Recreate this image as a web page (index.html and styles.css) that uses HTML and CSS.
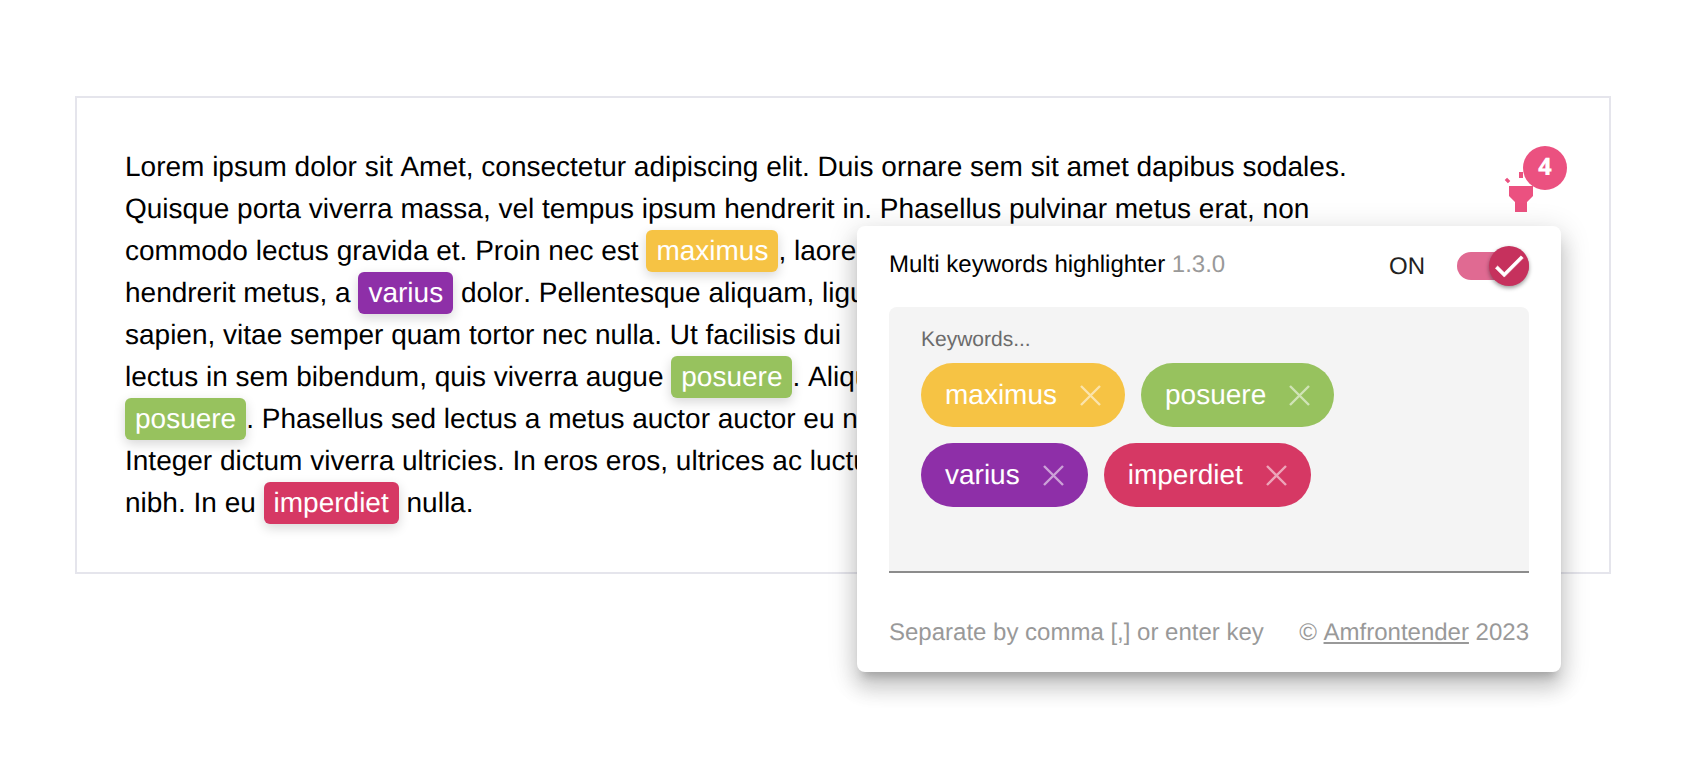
FILE: index.html
```html
<!DOCTYPE html>
<html lang="en">
<head>
<meta charset="utf-8">
<meta name="viewport" content="width=device-width, initial-scale=1">
<title>Multi keywords highlighter</title>
<link rel="stylesheet" href="styles.css">
</head>
<body>
<main class="page">
  <article class="card">
    <p class="copy">
      Lorem ipsum dolor sit Amet, consectetur adipiscing elit. Duis ornare sem sit amet dapibus sodales.<br>
      Quisque porta viverra massa, vel tempus ipsum hendrerit in. Phasellus pulvinar metus erat, non<br>
      commodo lectus gravida et. Proin nec est <mark class="hit amber">maximus</mark>, laoreet<br>
      hendrerit metus, a <mark class="hit purple">varius</mark> dolor. Pellentesque aliquam, ligula<br>
      sapien, vitae semper quam tortor nec nulla. Ut facilisis dui<br>
      lectus in sem bibendum, quis viverra augue <mark class="hit green">posuere</mark>. Aliquam<br>
      <mark class="hit green">posuere</mark>. Phasellus sed lectus a metus auctor auctor eu nec<br>
      Integer dictum viverra ultricies. In eros eros, ultrices ac luctus<br>
      nibh. In eu <mark class="hit rose">imperdiet</mark> nulla.
    </p>

    <div class="launcher">
      <svg class="torch" viewBox="0 0 24 24" aria-hidden="true"><path d="M6 14l3 3v5h6v-5l3-3V9H6zM11 2h2v3h-2zM3.85 6.05l1.2-1.2 1.6 1.6-1.2 1.2zM16.96 6.585l2.123-2.12 1.414 1.414L18.375 8z"/></svg>
      <span class="badge">4</span>
    </div>

    <section class="popup">
      <header class="head">
        <h1 class="title">Multi keywords highlighter <span class="version">1.3.0</span></h1>
        <label class="power">
          <span>ON</span>
          <span class="switch">
            <input class="track" type="checkbox" checked>
            <span class="thumb"><svg class="tick" viewBox="0 0 24 24" aria-hidden="true"><path d="M9 16.17L4.83 12l-1.42 1.41L9 19 21 7l-1.41-1.41z"/></svg></span>
          </span>
        </label>
      </header>

      <div class="field">
        <label class="label" for="keywords">Keywords...</label>
        <div class="chips">
          <span class="chip amber">maximus<button class="remove" type="button" aria-label="Remove maximus"><svg viewBox="0 0 21 21"><path d="M1 1l19 19M20 1L1 20"/></svg></button></span>
          <span class="chip green">posuere<button class="remove" type="button" aria-label="Remove posuere"><svg viewBox="0 0 21 21"><path d="M1 1l19 19M20 1L1 20"/></svg></button></span>
          <span class="chip purple">varius<button class="remove" type="button" aria-label="Remove varius"><svg viewBox="0 0 21 21"><path d="M1 1l19 19M20 1L1 20"/></svg></button></span>
          <span class="chip rose">imperdiet<button class="remove" type="button" aria-label="Remove imperdiet"><svg viewBox="0 0 21 21"><path d="M1 1l19 19M20 1L1 20"/></svg></button></span>
          <input class="entry" id="keywords" type="text">
        </div>
      </div>

      <footer class="foot">
        <span>Separate by comma [,] or enter key</span>
        <span>© <a class="link" href="#">Amfrontender</a> 2023</span>
      </footer>
    </section>
  </article>
</main>
</body>
</html>
```

FILE: styles.css
```css
* { box-sizing: border-box; }

body {
  margin: 0;
  background: #fff;
  color: #000;
  font-family: "Liberation Sans", Arial, Helvetica, sans-serif;
  font-kerning: none;
  text-rendering: geometricPrecision;
}

.page {
  min-height: 100vh;
  padding: 96px 80px 96px 75px;
}

.card {
  position: relative;
  display: flex;
  justify-content: space-between;
  padding: 48px;
  border: 2px solid #e5e5ec;
}

.copy {
  margin: 0;
  font-size: 28px;
  line-height: 42px;
  white-space: nowrap;
}

.amber { background: #f6c344; }
.green { background: #97c25e; }
.purple { background: #8e2fa8; }
.rose { background: #d63864; }

.hit {
  display: inline-block;
  padding: 0 10px;
  border-radius: 6px;
  color: #fff;
  box-shadow: 0 4px 12px rgba(0, 0, 0, 0.16);
}

/* Toolbar icon with its match counter */
.launcher {
  position: absolute;
  top: 48px;
  right: 42px;
  width: 70px;
  height: 70px;
}

.torch {
  position: absolute;
  left: 0;
  bottom: 0;
  width: 48px;
  height: 48px;
  fill: #eb5180;
}

.badge {
  position: absolute;
  top: 0;
  right: 0;
  width: 44px;
  height: 44px;
  border-radius: 50%;
  background: #eb5180;
  color: #fff;
  font: 800 24px/42px "Noto Sans", "Open Sans", sans-serif;
  text-align: center;
}

.popup {
  position: absolute;
  top: 128px;
  right: 48px;
  width: 704px;
  padding: 20px 32px 23px;
  border-radius: 8px;
  background: #fff;
  box-shadow:
    0 10px 10px -6px rgba(0, 0, 0, 0.2),
    0 16px 20px 2px rgba(0, 0, 0, 0.14),
    0 6px 28px 4px rgba(0, 0, 0, 0.12);
}

.head {
  display: flex;
  justify-content: space-between;
  align-items: flex-start;
  margin-bottom: 19px;
}

.title {
  margin: 0;
  font-size: 24px;
  font-weight: 400;
  line-height: 38px;
}

.version { color: #999; }

.power {
  display: flex;
  align-items: flex-start;
  gap: 32px;
  color: #222;
  font-size: 24px;
  line-height: 42px;
}

.switch {
  position: relative;
  display: flex;
  align-items: center;
  height: 40px;
}

.track {
  appearance: none;
  width: 72px;
  height: 28px;
  margin: 0;
  border-radius: 14px;
  background: #e06a92;
}

.thumb {
  position: absolute;
  top: 0;
  right: 0;
  display: grid;
  place-items: center;
  width: 40px;
  height: 40px;
  border-radius: 50%;
  background: #c6315d;
  box-shadow: 0 2px 4px rgba(0, 0, 0, 0.4);
}

.tick {
  width: 38px;
  height: 38px;
  fill: #fff;
  stroke: #fff;
  stroke-width: 0.4;
}

.field {
  padding: 21px 32px 64px;
  border-bottom: 2px solid #8c8c8c;
  border-radius: 8px 8px 0 0;
  background: #f4f4f4;
}

.label {
  display: block;
  margin-bottom: 11px;
  color: #6b6b6b;
  font-size: 21px;
  line-height: 24px;
}

.chips {
  display: flex;
  flex-wrap: wrap;
  gap: 16px;
}

.chip {
  display: flex;
  align-items: center;
  gap: 23px;
  height: 64px;
  padding: 0 24px;
  border-radius: 32px;
  color: #fff;
  font-size: 28px;
}

.remove {
  width: 21px;
  height: 21px;
  padding: 0;
  border: 0;
  background: none;
}

.remove svg {
  display: block;
  fill: none;
  stroke: rgba(255, 255, 255, 0.55);
  stroke-width: 2.4;
}

.entry {
  flex: 1;
  min-width: 140px;
  height: 64px;
  padding: 0;
  border: 0;
  outline: 0;
  background: none;
  font: inherit;
  font-size: 28px;
}

.foot {
  display: flex;
  justify-content: space-between;
  margin-top: 44px;
  color: #999;
  font-size: 24px;
  line-height: 32px;
}

.link {
  color: inherit;
  text-decoration: underline;
  text-decoration-thickness: 2px;
  text-underline-offset: 2px;
}
```
